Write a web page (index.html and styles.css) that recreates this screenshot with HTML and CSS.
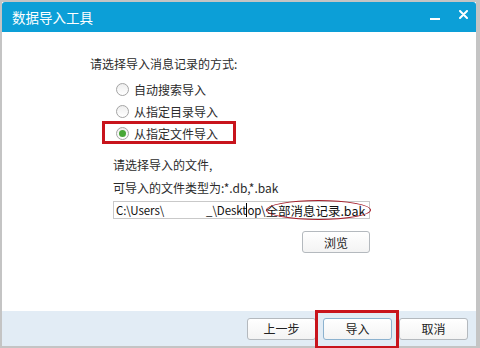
FILE: index.html
```html
<!DOCTYPE html>
<html lang="zh-CN">
<head>
    <meta charset="UTF-8">
    <title>数据导入工具</title>
    <link rel="stylesheet" href="styles.css">
</head>
<body>

<div class="window">
    <div class="titlebar">
        <span class="title">数据导入工具</span>
        <span class="btn-min"></span>
        <span class="btn-close">
            <svg width="9" height="9" viewBox="0 0 9 9"><path d="M1 1L8 8M8 1L1 8" stroke="#fff" stroke-width="2" stroke-linecap="round"/></svg>
        </span>
    </div>

    <div class="content">
        <div class="prompt">请选择导入消息记录的方式:</div>
        <div class="options">
            <div class="option"><span class="radio"></span><span>自动搜索导入</span></div>
            <div class="option"><span class="radio"></span><span>从指定目录导入</span></div>
            <div class="option checked">
                <span class="radio"></span><span>从指定文件导入</span>
                <span class="mark-box"></span>
            </div>
        </div>

        <div class="file">
            <div class="line">请选择导入的文件,</div>
            <div class="line">可导入的文件类型为:*.db,*.bak</div>
            <div class="input">
                <span>C:\Users\</span><span class="blank"></span><span>_\Deskt</span><span class="caret"></span><span>op\</span><span class="tail">全部消息记录.bak</span>
                <span class="mark-ellipse"></span>
            </div>
            <button class="btn browse">浏览</button>
        </div>
    </div>

    <div class="footer">
        <button class="btn">上一步</button>
        <button class="btn primary">导入<span class="mark-box wide"></span></button>
        <button class="btn">取消</button>
    </div>
</div>

</body>
</html>
```

FILE: styles.css
```css
* { margin: 0; padding: 0; box-sizing: border-box; }
html, body { width: 100%; height: 100%; }
body {
    overflow: hidden;
    background: #c4c4c4;
    font-family: "Noto Sans CJK SC", "Liberation Sans", sans-serif;
    font-size: 12px;
    color: #2b2b2b;
}
.window {
    width: 474px;
    height: 344px;
    margin: 2px 0 0 2px;
    background: #fff;
    display: flex;
    flex-direction: column;
    position: relative;
}
.titlebar {
    height: 30px;
    background: #0c9fd7;
    border-radius: 3px 3px 0 0;
    display: flex;
    align-items: center;
    padding: 0 8px 0 10px;
    color: #fff;
}
.title {
    font-size: 13.5px;
    line-height: 30px;
    flex: 1;
}
.btn-min {
    width: 10px;
    height: 2px;
    background: #fff;
    margin: 4px 19px 0 0;
}
.btn-close {
    display: flex;
    width: 9px;
    height: 9px;
    margin: -6px 0 0 0;
}
.content {
    flex: 1;
    padding: 22px 0 0 88px;
}
.prompt {
    line-height: 20px;
}
.options {
    margin: 4px 0 0 26px;
}
.option {
    height: 22px;
    display: flex;
    align-items: center;
    gap: 5px;
    position: relative;
    width: 102px;
}
.radio {
    width: 13px;
    height: 13px;
    border-radius: 50%;
    border: 1px solid #a4a4a4;
    background: linear-gradient(#eeeeee, #fff);
    display: flex;
    align-items: center;
    justify-content: center;
}
.checked .radio::after {
    content: "";
    width: 7px;
    height: 7px;
    border-radius: 50%;
    background: #48a838;
}
.mark-box {
    position: absolute;
    left: -14px;
    top: -1px;
    width: 134px;
    height: 23px;
    border: 3px solid #c8141c;
}
.file {
    margin: 9px 0 0 23px;
    width: 257px;
    display: flex;
    flex-direction: column;
}
.line {
    line-height: 23px;
}
.input {
    margin-top: 2px;
    height: 18px;
    border: 1px solid #c9c9c9;
    display: flex;
    align-items: center;
    padding-left: 2px;
    font-size: 11.5px;
    letter-spacing: -0.1px;
    white-space: nowrap;
    color: #111;
    position: relative;
}
.tail {
    font-size: 12.5px;
    letter-spacing: 0;
}
.blank { width: 42px; }
.caret {
    width: 1px;
    height: 14px;
    background: #000;
}
.mark-ellipse {
    position: absolute;
    left: 152px;
    top: -2px;
    width: 105px;
    height: 20px;
    border: 1.5px solid #a51d2a;
    border-radius: 50%;
}
.btn {
    font-family: inherit;
    font-size: 12px;
    color: #222;
    width: 69px;
    height: 22px;
    border: 1px solid #b4b9be;
    border-radius: 3px;
    background: linear-gradient(#ffffff, #f3f3f3);
    position: relative;
}
.browse {
    margin: 12px 0 0 auto;
    width: 68px;
}
.footer {
    height: 35px;
    background: #e2ecf5;
    display: flex;
    align-items: center;
    justify-content: flex-end;
    gap: 7px;
    padding: 0 8px 0 0;
}
.primary {
    border-color: #8cb2cf;
}
.mark-box.wide {
    left: -9px;
    top: -9px;
    width: 84px;
    height: 39px;
}
```
